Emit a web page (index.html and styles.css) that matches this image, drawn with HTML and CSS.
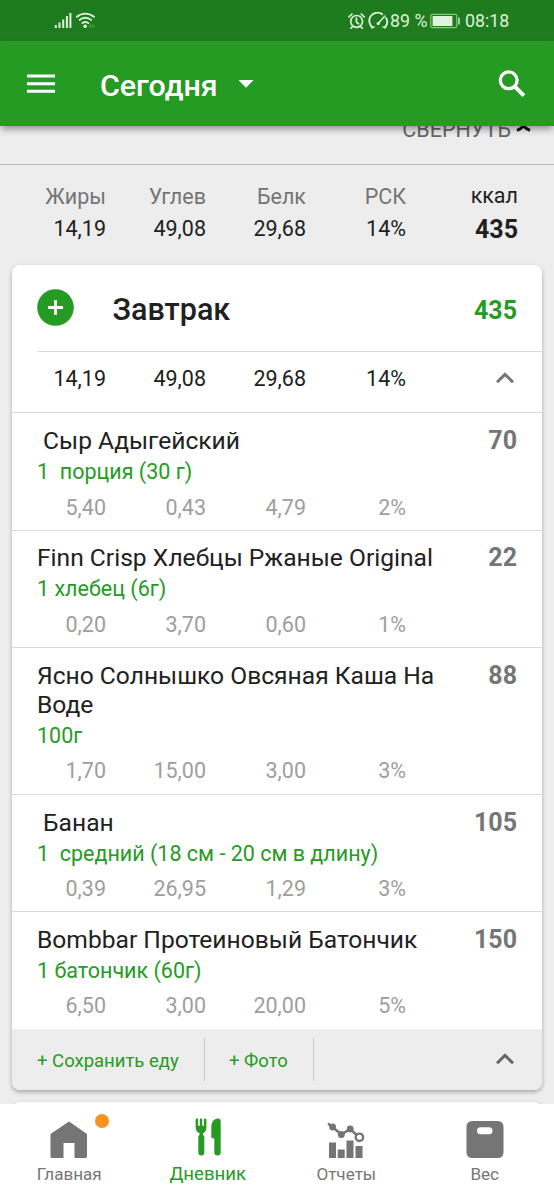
FILE: index.html
```html
<!DOCTYPE html>
<html lang="ru">
<head>
<meta charset="utf-8">
<title>Дневник</title>
<link rel="stylesheet" href="styles.css">
</head>
<body>
<div class="status">
  <svg class="signals" width="42" height="18" viewBox="0 0 42 18" fill="#dff3dc">
    <rect x="0.8" y="13" width="2" height="3"/><rect x="4.5" y="10.5" width="2" height="5.5"/><rect x="8.2" y="7.5" width="2" height="8.5"/><rect x="11.9" y="4" width="2" height="12"/><rect x="15.4" y="1" width="2" height="15"/>
    <g fill="none" stroke="#dff3dc" stroke-width="1.8"><path d="M22.3 5.2Q31.2-1.8 40.6 5.2"/><path d="M25 8.4Q31.2 3 37.8 8.4"/><path d="M27.7 11.6Q31.2 8.3 35 11.6"/></g>
    <circle cx="31.2" cy="14.2" r="1.8"/><path d="M37 12l-2 2.2 2 2.2zM38.5 12l2 2.2-2 2.2z" opacity=".3"/>
  </svg>
  <div class="status-right">
    <svg width="42" height="18" viewBox="0 0 42 18" fill="none" stroke="#dff3dc" stroke-width="1.7" stroke-linecap="round">
      <circle cx="8.6" cy="9.4" r="5.9"/><path d="M8.4 6v3.8l2.2 2M1 4.8L4 2M13.2 2l3 2.8M4.2 15l-1.2 1.2M13 15l1.2 1.2"/>
      <path d="M24.7 15.5A8 8 0 0 1 34.2 2.2M38 5.9A8 8 0 0 1 36.8 15.5" stroke-width="1.8"/><path d="M22.8 13.2l1.2 2.8 2.5-1.2M38.7 13.2l-1.4 2.6-2.6-.9" stroke-width="1.2"/>
      <path d="M30 11.8L36.8 4" stroke-width="1.4"/><circle cx="30.2" cy="11.5" r="1.6" fill="#dff3dc" stroke="none"/>
    </svg>
    <span class="battery-text">89 %</span>
    <svg class="battery" width="31" height="16" viewBox="0 0 31 16"><rect x=".8" y="1.3" width="26" height="13.4" rx="1.8" fill="none" stroke="#8bc488" stroke-width="1.2"/><rect x="2.6" y="3" width="19.8" height="10" fill="#dff3dc"/><rect x="28.2" y="4.5" width="1.6" height="7" fill="#bfe0bd"/></svg>
    <span class="clock">08:18</span>
  </div>
</div>
<header class="appbar">
  <svg class="menu" width="28" height="20" viewBox="0 0 28 20" fill="#fff"><path d="M0 .5h28v3H0zM0 8.2h28v3H0zM0 15.8h28v3H0z"/></svg>
  <h1 class="day">Сегодня</h1>
  <svg class="caret" width="16" height="8" viewBox="0 0 16 8" fill="#fff"><path d="M.5 0h15L8 7.8z"/></svg>
  <svg class="search" width="28" height="28" viewBox="0 0 28 28" fill="none" stroke="#fff"><circle cx="10.7" cy="10.3" r="8.4" stroke-width="3.3"/><path d="M16.7 16.4l9.2 9.2" stroke-width="4"/></svg>
</header>
<main class="content">
  <div class="collapse"><span>СВЕРНУТЬ</span><svg width="15" height="9" viewBox="0 0 15 9" fill="none" stroke="#111" stroke-width="3"><path d="M1 7.4Q4.5 6.2 7.5 3 10.5 6.2 14 7.4"/></svg></div>
  <section class="summary">
    <div class="cols labels"><span>Жиры</span><span>Углев</span><span>Белк</span><span>РСК</span><span class="kcal-label">ккал</span></div>
    <div class="cols totals"><span>14,19</span><span>49,08</span><span>29,68</span><span>14%</span><b>435</b></div>
  </section>
  <section class="card">
    <div class="meal">
      <svg width="37" height="37" viewBox="0 0 38 38"><circle cx="19" cy="19" r="18.8" fill="#259b24"/><path d="M11.3 19h15.4M19 11.3v15.4" stroke="#fff" stroke-width="2.9"/></svg>
      <h2>Завтрак</h2><b>435</b>
    </div>
    <div class="cols meal-totals"><span>14,19</span><span>49,08</span><span>29,68</span><span>14%</span>
      <svg class="chevron" width="20" height="12" viewBox="0 0 20 12"><path d="M2 10.2L10 2.4l8 7.8"/></svg></div>
    <article class="item">
      <div class="head"><span class="name"> Сыр Адыгейский</span><b>70</b></div>
      <div class="serving">1  порция (30 г)</div>
      <div class="cols values"><span>5,40</span><span>0,43</span><span>4,79</span><span>2%</span></div>
    </article>
    <article class="item">
      <div class="head"><span class="name">Finn Crisp Хлебцы Ржаные Original</span><b>22</b></div>
      <div class="serving">1 хлебец (6г)</div>
      <div class="cols values"><span>0,20</span><span>3,70</span><span>0,60</span><span>1%</span></div>
    </article>
    <article class="item">
      <div class="head"><span class="name">Ясно Солнышко Овсяная Каша На
Воде</span><b>88</b></div>
      <div class="serving">100г</div>
      <div class="cols values"><span>1,70</span><span>15,00</span><span>3,00</span><span>3%</span></div>
    </article>
    <article class="item">
      <div class="head"><span class="name"> Банан</span><b>105</b></div>
      <div class="serving">1  средний (18 см - 20 см в длину)</div>
      <div class="cols values"><span>0,39</span><span>26,95</span><span>1,29</span><span>3%</span></div>
    </article>
    <article class="item">
      <div class="head"><span class="name">Bombbar Протеиновый Батончик</span><b>150</b></div>
      <div class="serving">1 батончик (60г)</div>
      <div class="cols values"><span>6,50</span><span>3,00</span><span>20,00</span><span>5%</span></div>
    </article>
    <footer class="actions">
      <span class="save">+ Сохранить еду</span><span class="photo">+ Фото</span>
      <svg class="chevron" width="20" height="12" viewBox="0 0 20 12"><path d="M2 10.2L10 2.4l8 7.8"/></svg>
    </footer>
  </section>
  <section class="card next"></section>
</main>
<nav class="tabs">
  <div class="tab">
    <svg width="38" height="42" viewBox="0 0 38 42" fill="#757575"><path d="M19 3.5L37 16v22.5q0 1.5-1.5 1.5H24.5V25h-11v15H2q-1.5 0-1.5-1.5V16z"/></svg>
    <span>Главная</span><i class="dot"></i>
  </div>
  <div class="tab active">
    <svg width="38" height="42" viewBox="0 0 38 42" fill="#259b24"><path d="M6.6 1.5c0-1.5 2.5-1.5 2.5 0v6.3h1.7V1.5c0-1.5 2.4-1.5 2.4 0v6.3h1.7V1.5c0-1.5 2.5-1.5 2.5 0V9c0 3.5-1 5.2-3.3 6.3v1.5l1.2 1.7v16q0 3-3 3t-3-3v-16l1.2-1.7v-1.5C7.8 14.2 6.6 12.5 6.6 9z"/><path d="M31.7 3v31.5q0 3-3.2 3t-3.2-3V20.5l-3-.8V9.2C22.3 4 24.8.5 29 .5q2.7 0 2.7 2.5z"/></svg>
    <span>Дневник</span>
  </div>
  <div class="tab">
    <svg width="38" height="42" viewBox="0 0 38 42" fill="#757575"><path d="M2 24.5h7V40H2zM10.7 31.5h7V40h-7zM19.5 22.5h7V40h-7zM28.5 28h7v12h-7z"/><path d="M1 5.5L5.6 9l8.7 7.5L23.2 11l6.5 6" fill="none" stroke="#757575" stroke-width="2.4"/><circle cx="5.6" cy="9" r="3.4"/><circle cx="14.3" cy="16.5" r="3.5"/><circle cx="23.2" cy="11" r="3.4"/><circle cx="32.4" cy="19.3" r="3.7" fill="#fff" stroke="#757575" stroke-width="2.4"/></svg>
    <span>Отчеты</span>
  </div>
  <div class="tab">
    <svg width="38" height="42" viewBox="0 0 38 42"><rect x=".5" y="3" width="37" height="37" rx="5.5" fill="#757575"/><rect x="11" y="9.3" width="15.5" height="7" rx="3.5" fill="#fff"/></svg>
    <span>Вес</span>
  </div>
</nav>
</body>
</html>
```
FILE: styles.css
```css
* { box-sizing: border-box; }
body {
  margin: 0;
  width: 554px;
  height: 1200px;
  overflow: hidden;
  display: flex;
  flex-direction: column;
  font-family: Roboto, sans-serif;
  font-size: 21.5px;
  line-height: 26px;
  color: #212121;
  background: #ededed;
}
svg { display: block; flex: none; }
.status {
  height: 41px;
  flex: none;
  display: flex;
  justify-content: space-between;
  align-items: center;
  padding: 1px 45px 0 54px;
  background: #1f7c1e;
  color: #dff3dc;
  font-size: 17.8px;
}
.signals { margin-top: -1px; }
.status-right { display: flex; align-items: center; }
.battery-text { width: 40px; white-space: nowrap; }
.battery { margin-right: 4px; }
.clock { width: 44px; }
.appbar {
  height: 85px;
  flex: none;
  display: flex;
  align-items: center;
  padding: 0 28px 0 27px;
  background: #259b24;
  box-shadow: 0 4px 7px -1px rgba(0, 0, 0, .4);
  z-index: 2;
}
.menu { margin-right: 45px; }
.day {
  margin: 4px 21px 0 0;
  width: 117px;
  white-space: nowrap;
  font-size: 30.4px;
  font-weight: 500;
  line-height: 34px;
  color: #fff;
}
.search { margin-left: auto; }
.content { flex: 1; min-height: 0; margin-top: -18px; padding-top: 18px; overflow: hidden; }
.collapse {
  height: 39px;
  display: flex;
  justify-content: flex-end;
  align-items: flex-start;
  gap: 5px;
  padding-right: 23px;
  border-bottom: 1px solid #b5b5b5;
  color: #666;
}
.collapse span { margin-top: -9px; }
.collapse svg { margin-top: -3px; }
.cols {
  display: grid;
  grid-template-columns: 94px 100px 100px 100px 111px;
  text-align: right;
}
.summary { height: 99.6px; padding: 19px 12px 0; }
.labels { color: #757575; }
.kcal-label { color: #212121; margin-top: -1px; }
.totals { margin-top: 6px; }
.totals b { font-size: 25px; padding-top: 1px; }
.summary .cols { grid-template-columns: 94px 100px 100px 100px 112px; }
.card {
  width: 530px;
  margin: 0 12px;
  border-radius: 8px;
  background: #fff;
  box-shadow: 0 2px 4px rgba(0, 0, 0, .3);
}
.card b { font-weight: 700; }
.meal {
  height: 87px;
  margin-left: 25px;
  padding: 0 25px 0 0;
  display: flex;
  align-items: center;
  border-bottom: 1px solid #d9d9d9;
}
.meal h2 { margin: 5px 0 0 38.5px; font-size: 30.5px; font-weight: 500; line-height: 34px; }
.meal b { margin: 7px 0 0 auto; font-size: 25px; color: #259b24; }
.meal-totals { height: 60.8px; padding-top: 14px; }
.chevron { fill: none; stroke: #757575; stroke-width: 3; }
.meal-totals .chevron { justify-self: end; margin: 6px 2px 0 0; }
.item { border-top: 1px solid #d9d9d9; height: 117.3px; padding-top: 12.6px; }
.item:nth-of-type(3) { height: 147px; }
.head {
  display: flex;
  justify-content: space-between;
  padding: 0 25px;
  font-size: 24.6px;
  line-height: 29px;
}
.name { white-space: pre; }
.head b { color: #757575; font-size: 25px; }
.serving { padding-left: 25px; margin-top: 4px; color: #259b24; white-space: pre; }
.values { margin-top: 9.6px; color: #9e9e9e; }
.actions {
  height: 61.3px;
  display: flex;
  align-items: center;
  padding: 0 27px 0 25px;
  border-radius: 0 0 8px 8px;
  background: #ededed;
  color: #259b24;
  font-size: 18.5px;
}
.save, .photo { height: 43px; line-height: 46px; white-space: nowrap; border-right: 1px solid #c8c8c8; }
.save { width: 168px; }
.photo { width: 109px; padding-left: 24px; }
.actions .chevron { margin-left: auto; stroke: #666; }
.next { height: 40px; margin-top: 12px; }
.tabs { height: 96px; flex: none; display: flex; background: #fff; z-index: 1; }
.tab {
  position: relative;
  flex: 1;
  display: flex;
  flex-direction: column;
  align-items: center;
  padding-top: 14px;
  font-size: 17.1px;
  color: #757575;
}
.tab span { margin-top: 1px; }
.active { color: #259b24; font-size: 18.6px; }
.dot { position: absolute; left: 95px; top: 10px; width: 14px; height: 14px; border-radius: 50%; background: #f7931e; }
```
